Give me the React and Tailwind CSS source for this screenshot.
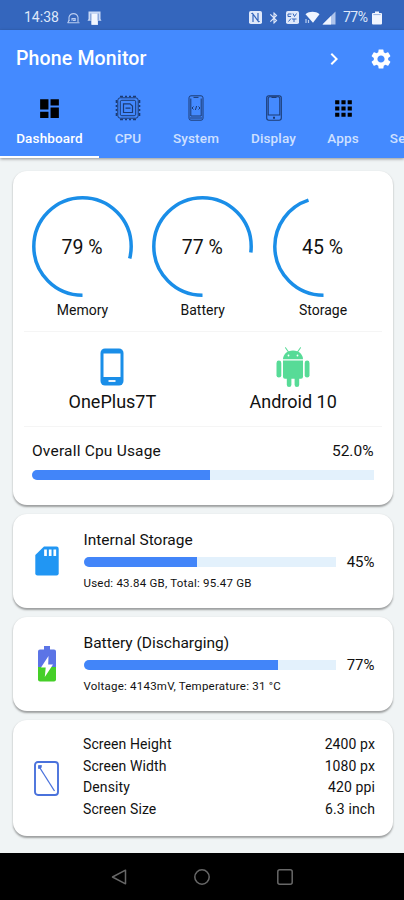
import { MdDashboard, MdApps, MdSettings, MdChevronRight, MdBluetooth } from "react-icons/md";

const StatusBar = () => (
  <div className="flex h-[30px] items-center bg-[#3466bd] pt-[5px] text-[#dfe8fa]">
    <span className="ml-6 w-[35px] text-[14px]">14:38</span>
    <svg className="ml-[8px]" width="13" height="12" viewBox="0 0 13 12" fill="none" stroke="#b9cdf1" strokeWidth="1.1">
      <path d="M0.500 10.800h12M2 9V5.200C2.600 3 4.200 1.600 6.500 1.600s3.900 1.400 4.500 3.600V10" />
      <path d="M5 8.800V6.600h3.200v1.800H6M0.800 10.800L2.300 8" />
    </svg>
    <svg className="ml-[7px]" width="15" height="14" viewBox="0 0 15 14">
      <path d="M1.500 0.500h12v7.500l1 1.800h-3.500V14h-6.500V9.800H0.500l1-1.800z" fill="#c8d8f5" />
      <path d="M4.500 3h6v10.500h-6z" fill="#f3f7ff" />
      <path d="M3.800 2.500v7M11.200 2.500v7" stroke="#5b84cc" strokeWidth="0.800" />
    </svg>
    <div className="ml-auto mr-[22px] flex items-center">
      <svg width="13" height="13" viewBox="0 0 13 13">
        <rect width="13" height="13" rx="1.800" fill="#dfe8fa" />
        <path d="M4 11V3l5 7V2M2.300 2.500H4M9 10.500h1.700" fill="none" stroke="#3466bd" strokeWidth="1.200" />
      </svg>
      <MdBluetooth className="ml-[5px]" size={14} />
      <svg className="ml-[5px]" width="13" height="13" viewBox="0 0 13 13">
        <rect width="13" height="13" rx="1.800" fill="#dfe8fa" />
        <path d="M2 3h3.500M2 5.500h3M2 3v2.500M7 2.500l1.500 3 2-3M2.500 10.500l2.500-3M6 8h4.500M8 8v3" fill="none" stroke="#3466bd" strokeWidth="1" />
      </svg>
      <svg className="ml-[6px]" width="15" height="13" viewBox="0 0 15 13">
        <path d="M0.500 3.200C4.500 0 10.500 0 14.500 3.200L8 11.800z" fill="#f0f5ff" />
        <path d="M1 8v4M3.500 9v3" stroke="#b9cdf1" strokeWidth="1.200" />
      </svg>
      <svg className="ml-[2px]" width="14" height="14" viewBox="0 0 14 14">
        <path d="M0.500 13.500L13.500 0.500v13z" fill="#aec4ec" />
        <path d="M0.500 13.500L9 5v8.500z" fill="#f0f5ff" />
      </svg>
      <span className="ml-[7px] w-[27px] text-[14px] tracking-[-0.5px]">77%</span>
      <svg className="ml-[2px]" width="10" height="14" viewBox="0 0 10 14" fill="#f0f5ff">
        <path d="M3 0.500h4V2h2a1 1 0 0 1 1 1v9.500a1 1 0 0 1-1 1H1a1 1 0 0 1-1-1V3a1 1 0 0 1 1-1h2z" />
        <path d="M1.300 3.600h7.400" stroke="#7d9fd9" strokeWidth="0.800" />
      </svg>
    </div>
  </div>
);

const CpuIcon = () => (
  <svg width="26" height="26" viewBox="0 0 26 26" fill="none" stroke="#1c3b73" strokeWidth="1">
    <rect x="2.800" y="2.800" width="20.400" height="20.400" rx="2.500" />
    <rect x="5.300" y="5.300" width="15.400" height="15.400" rx="1.500" />
    <path d="M5 1.500h3M10 1.500h2M14 1.500h2M18 1.500h3M5 24.500h3M10 24.500h2M14 24.500h2M18 24.500h3M1.500 5v3M1.500 10v2M1.500 14v2M1.500 18v3M24.500 5v3M24.500 10v2M24.500 14v2M24.500 18v3" strokeWidth="1.600" />
    <path d="M8.500 17.500V8.800h6.500l2.500 2.300V17.500zM10.500 13.200h5" strokeWidth="1.200" />
  </svg>
);

const SystemIcon = () => (
  <svg width="16" height="26" viewBox="0 0 16 26" fill="none" stroke="#1c3b73" strokeWidth="1">
    <rect x="1" y="0.800" width="14" height="24.400" rx="2" />
    <path d="M2.800 3.500v17.500h10.400V3.500M5.500 2.400h5M2 23h12M5.500 11.500l-1.500 1.500 1.500 1.500M10.500 11.500l1.500 1.500-1.500 1.500M8.600 11l-1.200 4" />
  </svg>
);

const DisplayIcon = () => (
  <svg width="16" height="26" viewBox="0 0 16 26" fill="none" stroke="#1c3b73" strokeWidth="1.100">
    <rect x="0.700" y="0.700" width="14.600" height="24.600" rx="2.200" />
    <path d="M2.200 3.300v16.700h11.600V3.300l-1-1.500H3.200zM5.500 2.500h5" />
    <path d="M7 22.700h2" strokeWidth="2" />
  </svg>
);

const tabs = [
  { name: "Dashboard", width: "w-[99px]", icon: <MdDashboard size={25} color="#000" />, active: true },
  { name: "CPU", width: "w-[58px]", icon: <CpuIcon /> },
  { name: "System", width: "w-[78px]", icon: <SystemIcon /> },
  { name: "Display", width: "w-[77px]", icon: <DisplayIcon /> },
  { name: "Apps", width: "w-[62px]", icon: <MdApps size={25} color="#000" /> },
  { name: "Sensors", width: "w-[82px]", icon: null },
];

const Header = () => (
  <header className="relative h-[128px] overflow-hidden bg-[#448aff] text-white shadow-[0_1px_3px_rgba(0,0,0,0.4)]">
    <div className="flex h-14 items-center pl-4 pr-[11px] pt-[1px]">
      <h1 className="pt-[1px] text-[19.500px] font-medium tracking-[0.15px]">Phone Monitor</h1>
      <MdChevronRight className="ml-auto mr-[23px]" size={24} />
      <MdSettings size={24} />
    </div>
    <nav className="flex h-[72px]">
      {tabs.map((tab) => (
        <div
          key={tab.name}
          className={`flex shrink-0 flex-col items-center border-b-2 ${tab.width} ${
            tab.active ? "border-white text-white" : "border-transparent text-[#cfe0ff]"
          }`}
        >
          <div className="mt-[9px] flex h-[26px] items-center">{tab.icon}</div>
          <span className="mt-[7px] text-[13.500px] leading-[20px] font-medium tracking-[0.15px]">{tab.name}</span>
        </div>
      ))}
    </nav>
  </header>
);

const Gauge = ({ value, label }) => (
  <div className="flex w-[101px] flex-col items-center">
    <div className="grid size-[101px] place-items-center">
      <svg className="col-start-1 row-start-1" width="101" height="101" viewBox="0 0 101 101">
        <circle
          cx="50.5"
          cy="50.5"
          r="48.7"
          fill="none"
          stroke="#1a8ee8"
          strokeWidth="3.500"
          pathLength="100"
          strokeDasharray={`${value} 100`}
          transform="rotate(90 50.5 50.5)"
        />
      </svg>
      <span className="col-start-1 row-start-1 pr-[1px] pt-[2px] text-[19.500px]">{value} %</span>
    </div>
    <span className="mt-[4px] text-[14px] leading-[18px]">{label}</span>
  </div>
);

const Bar = ({ value, className }) => (
  <div className={`h-[10px] overflow-hidden rounded-l-full rounded-r-[2px] bg-[#e3f1fc] ${className}`}>
    <div className="h-full bg-[#4285f9]" style={{ width: `${value}%` }} />
  </div>
);

const Card = ({ className, children }) => (
  <section className={`rounded-[14px] bg-white shadow-[0_1.500px_2px_rgba(0,0,0,0.35)] ${className}`}>{children}</section>
);

const PhoneIcon = () => (
  <svg width="24" height="38" viewBox="0 0 24 38">
    <rect x="0.500" y="0.500" width="23" height="37" rx="4.500" fill="#1a8ee8" />
    <path d="M3.500 5.500h17v23.500h-17z" fill="#fff" />
    <path d="M8.500 33h7" stroke="#fff" strokeWidth="1.800" />
  </svg>
);

const AndroidIcon = () => (
  <svg width="34" height="40" viewBox="0 0 34 40" fill="#57db97">
    <path d="M7 12.300C7 7.500 11 3.500 17 3.500s10 4 10 8.800z" />
    <path d="M9.500 0.800l3 4.200M24.500 0.800l-3 4.200" stroke="#57db97" strokeWidth="1.100" strokeLinecap="round" />
    <circle cx="12.500" cy="8.500" r="0.900" fill="#fff" />
    <circle cx="21.500" cy="8.500" r="0.900" fill="#fff" />
    <path d="M7 13.600h20v16.200a2 2 0 0 1-2 2H9a2 2 0 0 1-2-2z" />
    <rect x="0.500" y="13.600" width="4.800" height="17" rx="2.400" />
    <rect x="28.700" y="13.600" width="4.800" height="17" rx="2.400" />
    <rect x="10.800" y="27" width="4.600" height="13" rx="2.300" />
    <rect x="18.600" y="27" width="4.600" height="13" rx="2.300" />
  </svg>
);

const SdCardIcon = () => (
  <svg width="24" height="30" viewBox="0 0 24 30">
    <path d="M9 0.500h12.500a2.200 2.200 0 0 1 2.200 2.200v24.600a2.200 2.200 0 0 1-2.200 2.200h-19a2.200 2.200 0 0 1-2.200-2.200V9z" fill="#2196f3" />
    <path d="M10.500 3.500v6.500M15.200 3.500v6.500M19.800 3.500v6.500" stroke="#fff" strokeWidth="2.700" />
  </svg>
);

const BatteryIcon = () => (
  <svg width="18" height="36" viewBox="0 0 18 36">
    <path d="M6 0h6v3.500h4a2 2 0 0 1 2 2V21H0V5.500a2 2 0 0 1 2-2h4z" fill="#5b74e6" />
    <path d="M0 21h18v12.500a2 2 0 0 1-2 2H2a2 2 0 0 1-2-2z" fill="#45cf28" />
    <path d="M10.500 10L3 21.500h4.700L6.800 31 15 18.500h-4.800z" fill="#fff" />
  </svg>
);

const ScreenIcon = () => (
  <svg width="25" height="35" viewBox="0 0 25 35" fill="none" stroke="#4a72dc">
    <rect x="1" y="1" width="23" height="33" rx="3" strokeWidth="1.900" />
    <path d="M5 5.500L20.500 30" strokeWidth="1.300" />
    <path d="M4.500 4.500h3l-0.500 2.500-2.500 0.500z" fill="#4a72dc" strokeWidth="0.800" />
  </svg>
);

const screenInfo = [
  ["Screen Height", "2400 px"],
  ["Screen Width", "1080 px"],
  ["Density", "420 ppi"],
  ["Screen Size", "6.3 inch"],
];

const StatCard = ({ icon, title, value, detail }) => (
  <Card className="flex h-[94px] pl-[21.500px] pr-[18.500px]">
    <div className="flex w-[25px] shrink-0 items-center justify-center">{icon}</div>
    <div className="ml-[24.500px] flex-1 pt-[15px]">
      <h2 className="text-[15.500px] leading-[22px]">{title}</h2>
      <div className="mt-[1px] flex h-[20px] items-center">
        <Bar value={value} className="flex-1" />
        <span className="w-[38.500px] text-right text-[15px]">{value}%</span>
      </div>
      <p className="mt-[4px] text-[11.500px] leading-[15px] tracking-[0.220px]">{detail}</p>
    </div>
  </Card>
);

const Dashboard = () => (
  <main className="flex h-[695px] flex-col gap-[9px] bg-[#f0f4f5] pl-[12.500px] pr-[11px] pt-[13px] text-[#111]">
    <Card className="h-[334px] px-[19.500px]">
      <div className="flex justify-between pt-[25px]">
        <Gauge value={79} label="Memory" />
        <Gauge value={77} label="Battery" />
        <Gauge value={45} label="Storage" />
      </div>
      <div className="-mx-[8px] mt-[12px] flex h-[96px] border-y border-[#f5f5f5] pt-[16px]">
        <div className="flex w-1/2 flex-col items-center pr-[2px]">
          <PhoneIcon />
          <span className="mt-[4px] text-[18px] leading-[24px]">OnePlus7T</span>
        </div>
        <div className="flex w-1/2 flex-col items-center pl-[2px]">
          <div className="-mt-[1px] h-[39px]">
            <AndroidIcon />
          </div>
          <span className="mt-[4px] text-[18px] leading-[24px]">Android 10</span>
        </div>
      </div>
      <div className="mt-[13px] flex justify-between text-[15.500px] leading-[22px]">
        <span className="tracking-[0.2px]">Overall Cpu Usage</span>
        <span>52.0%</span>
      </div>
      <Bar value={52} className="mt-[8px]" />
    </Card>

    <StatCard icon={<SdCardIcon />} title="Internal Storage" value={45} detail="Used: 43.84 GB, Total: 95.47 GB" />
    <StatCard icon={<BatteryIcon />} title="Battery (Discharging)" value={77} detail="Voltage: 4143mV, Temperature: 31 °C" />

    <Card className="flex h-[116px] items-center pl-[21.500px] pr-[18px]">
      <ScreenIcon />
      <dl className="-mt-[2px] ml-[24px] flex-1">
        {screenInfo.map(([name, value]) => (
          <div key={name} className="flex h-[21.600px] items-center justify-between text-[14px] tracking-[0.1px]">
            <dt>{name}</dt>
            <dd>{value}</dd>
          </div>
        ))}
      </dl>
    </Card>
  </main>
);

const NavBar = () => (
  <div className="flex h-[47px] items-center justify-center gap-[67px] bg-black">
    <svg width="16" height="16" viewBox="0 0 16 16" fill="none" stroke="#686868" strokeWidth="1.500">
      <path d="M14.500 1.200v13.600L1.500 8z" strokeLinejoin="round" />
    </svg>
    <svg width="16" height="16" viewBox="0 0 16 16" fill="none" stroke="#686868" strokeWidth="1.500">
      <circle cx="8" cy="8" r="7.200" />
    </svg>
    <svg width="16" height="16" viewBox="0 0 16 16" fill="none" stroke="#686868" strokeWidth="1.500">
      <rect x="0.800" y="0.800" width="14.400" height="14.400" rx="2" />
    </svg>
  </div>
);

const App = () => (
  <div className="h-[900px] w-[404px] overflow-hidden font-[Roboto,sans-serif]">
    <StatusBar />
    <Header />
    <Dashboard />
    <NavBar />
  </div>
);

export default App;
